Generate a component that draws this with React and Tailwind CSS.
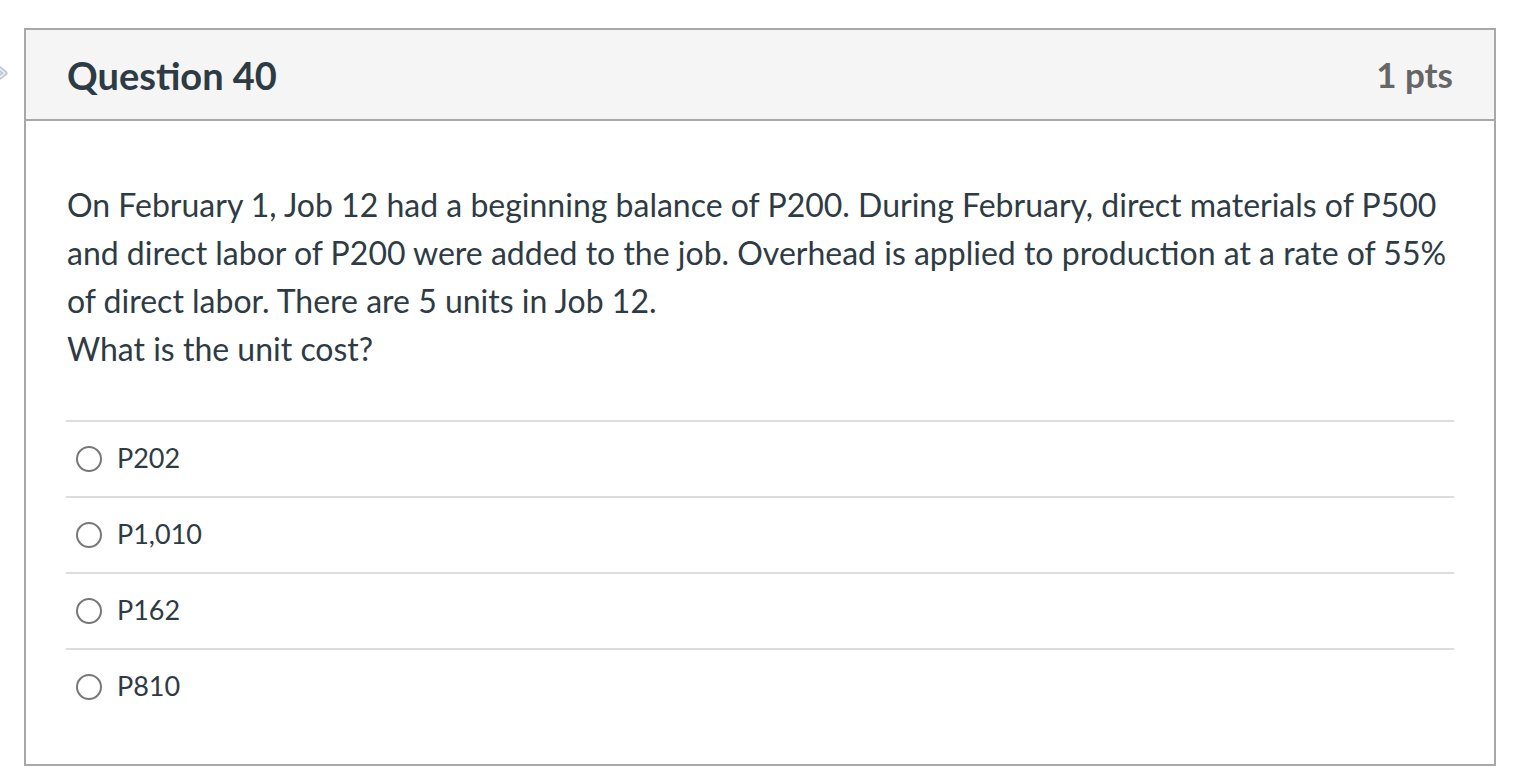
import React from "react";

const answers = ["P202", "P1,010", "P162", "P810"];

export default function App() {
  return (
    <div
      className="relative min-h-[784px] w-full bg-white pt-[28px] pl-[24px]"
      style={{ fontFamily: "Lato, 'Open Sans', sans-serif" }}
    >
      <svg
        className="absolute left-[-13px] top-[59px]"
        width="24"
        height="28"
        viewBox="0 0 24 28"
      >
        <path
          d="M4 3 L18 14 L4 25"
          fill="none"
          stroke="#bcc7cf"
          strokeWidth="5"
          strokeLinejoin="round"
          strokeLinecap="round"
        />
        <path
          d="M4 3 L18 14 L4 25"
          fill="none"
          stroke="#eef2f5"
          strokeWidth="1.5"
          strokeLinejoin="round"
          strokeLinecap="round"
        />
      </svg>
      <div className="w-[1472px] h-[738px] border-2 border-[#a8a8a8] flex flex-col">
        <div className="h-[91px] shrink-0 bg-[#f5f5f5] border-b-2 border-[#a8a8a8] flex items-center justify-between px-[41px]">
          <div className="text-[38px] font-bold text-[#2d3b45] leading-none">
            Question 40
          </div>
          <div className="text-[35px] font-bold text-[#666666] leading-none">
            1 pts
          </div>
        </div>
        <div className="px-[40px] pt-[60px]">
          <div className="pl-[1px] text-[32px] leading-[48px] text-[#2d3b45] whitespace-nowrap">
            On February 1, Job 12 had a beginning balance of P200. During
            February, direct materials of P500
            <br />
            and direct labor of P200 were added to the job. Overhead is applied
            to production at a rate of 55%
            <br />
            of direct labor. There are 5 units in Job 12.
            <br />
            What is the unit cost?
          </div>
          <div className="mt-[47px]">
            {answers.map((a) => (
              <div key={a} className="border-t-2 border-[#dddddd]">
                <div className="h-[74px] flex items-center">
                  <div className="ml-[10px] w-[26px] h-[26px] rounded-full border-2 border-[#777777] bg-white shrink-0" />
                  <span className="ml-[15px] mb-[4px] text-[27px] text-[#2d3b45] leading-none">
                    {a}
                  </span>
                </div>
              </div>
            ))}
          </div>
        </div>
      </div>
    </div>
  );
}
